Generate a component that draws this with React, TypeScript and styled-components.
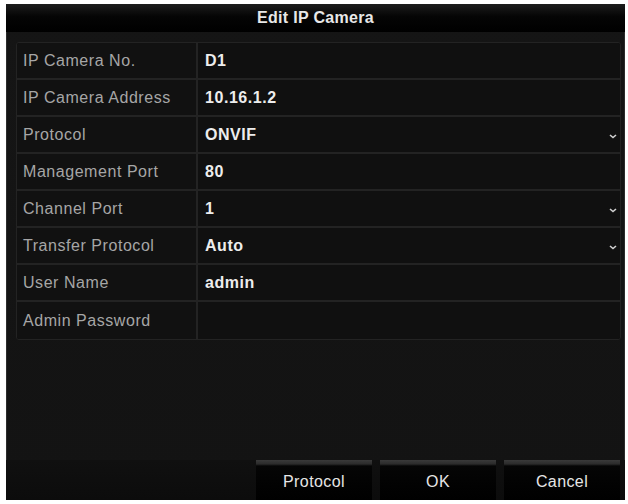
import styled, { createGlobalStyle } from 'styled-components'

const GlobalStyle = createGlobalStyle`
    html, body {
        margin: 0;
        padding: 0;
        background: #ffffff;
    }
    body {
        font-family: "Liberation Sans", Arial, sans-serif;
    }
`

const Page = styled.div`
    width: 628px;
    height: 504px;
    padding: 4px 3px 4px 6px;
    box-sizing: border-box;
`

const Dialog = styled.div`
    width: 619px;
    height: 496px;
    display: flex;
    flex-direction: column;
    background: linear-gradient(#151515, #131313);
    box-shadow: inset 0 0 0 1px #2c2c2c;
`

const TitleBar = styled.div`
    height: 28px;
    flex: none;
    display: flex;
    align-items: center;
    justify-content: center;
    background: linear-gradient(#1c1c1c 0, #050505 45%, #000 100%);
    color: #e8e8e8;
    font-size: 16px;
    font-weight: 600;
    letter-spacing: 0.3px;
`

const Body = styled.div`
    flex: 1;
    padding: 10px 4px 0 10px;
`

const Table = styled.div`
    display: grid;
    grid-template-columns: 181px 1fr;
    grid-auto-rows: 37px;
    background: #0f0f0f;
    border: 1px solid #232323;
    border-radius: 3px;
    overflow: hidden;
`

const Cell = styled.div<{ $label?: boolean; $last?: boolean }>`
    position: relative;
    display: flex;
    align-items: center;
    padding-left: ${(p) => (p.$label ? '6px' : '7px')};
    border-bottom: ${(p) => (p.$last ? 'none' : '2px solid #232323')};
    border-right: ${(p) => (p.$label ? '2px solid #232323' : 'none')};
    background: ${(p) => (p.$label ? '#111111' : '#101010')};
    color: ${(p) => (p.$label ? '#a6a6a6' : '#ededed')};
    font-size: 16px;
    font-weight: ${(p) => (p.$label ? 400 : 600)};
    letter-spacing: 0.55px;
`

const Chevron = styled.svg`
    position: absolute;
    right: 3px;
    top: 50%;
    margin-top: -1px;
`

const Footer = styled.div`
    height: 40px;
    flex: none;
    display: flex;
    justify-content: flex-end;
    gap: 8px;
    padding-right: 5px;
    background: linear-gradient(#101010, #0c0c0c);
`

const Button = styled.button`
    width: 116px;
    height: 100%;
    border: none;
    padding: 4px 0 0;
    background: linear-gradient(#3a3a3a 0, #2b2b2b 4px, #050505 6px, #000 100%);
    color: #e6e6e6;
    font-family: "Liberation Sans", Arial, sans-serif;
    font-size: 16px;
    letter-spacing: 0.4px;
`

const rows = [
    { label: 'IP Camera No.', value: 'D1' },
    { label: 'IP Camera Address', value: '10.16.1.2' },
    { label: 'Protocol', value: 'ONVIF', select: true },
    { label: 'Management Port', value: '80' },
    { label: 'Channel Port', value: '1', select: true },
    { label: 'Transfer Protocol', value: 'Auto', select: true },
    { label: 'User Name', value: 'admin' },
    { label: 'Admin Password', value: '' },
]

export default function App() {
    return (
        <>
            <GlobalStyle />
            <Page>
                <Dialog>
                    <TitleBar>Edit IP Camera</TitleBar>
                    <Body>
                        <Table>
                            {rows.map((row, i) => {
                                const last = i === rows.length - 1
                                return [
                                    <Cell key={row.label} $label $last={last}>
                                        {row.label}
                                    </Cell>,
                                    <Cell key={row.label + '-v'} $last={last}>
                                        {row.value}
                                        {row.select && (
                                            <Chevron width="8" height="5" viewBox="0 0 8 5">
                                                <path d="M1 1 L4 3.5 L7 1" stroke="#cfcfcf" strokeWidth="1.6" fill="none" />
                                            </Chevron>
                                        )}
                                    </Cell>,
                                ]
                            })}
                        </Table>
                    </Body>
                    <Footer>
                        <Button>Protocol</Button>
                        <Button>OK</Button>
                        <Button>Cancel</Button>
                    </Footer>
                </Dialog>
            </Page>
        </>
    )
}
